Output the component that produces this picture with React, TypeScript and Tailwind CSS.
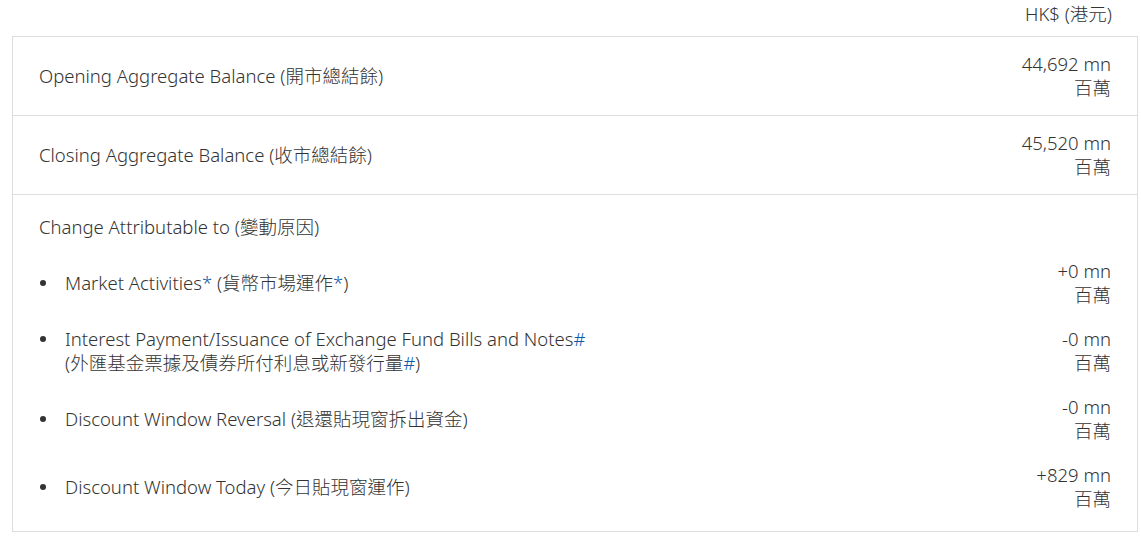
import React from "react";

interface Item {
  label: React.ReactNode;
  value: string;
}

const Mark = ({ children }: { children: React.ReactNode }) => (
  <span className="text-[#0f5aa8]">{children}</span>
);

const items: Item[] = [
  {
    label: (
      <>
        Market Activities<Mark>*</Mark> (貨幣市場運作<Mark>*</Mark>)
      </>
    ),
    value: "+0 mn",
  },
  {
    label: (
      <>
        Interest Payment/Issuance of Exchange Fund Bills and Notes<Mark>#</Mark>
        <br />
        (外匯基金票據及債券所付利息或新發行量<Mark>#</Mark>)
      </>
    ),
    value: "-0 mn",
  },
  { label: "Discount Window Reversal (退還貼現窗拆出資金)", value: "-0 mn" },
  { label: "Discount Window Today (今日貼現窗運作)", value: "+829 mn" },
];

function Amount({ value }: { value: string }) {
  return (
    <div className="text-right shrink-0">
      <div>{value}</div>
      <div>百萬</div>
    </div>
  );
}

export default function App() {
  return (
    <div
      className="w-full bg-white text-[#333] text-[18.5px] font-light leading-6"
      style={{ fontFamily: '"Noto Sans", "Noto Sans CJK TC", sans-serif' }}
    >
      {/* currency heading */}
      <div className="pt-[2px] pb-[10px] pr-[29px] text-right">HK$ (港元)</div>

      <div className="ml-3 mr-[3px] border border-[#dddddd]">
        {/* opening / closing */}
        <div className="flex items-center justify-between px-[26px] py-[15px] border-b border-[#dddddd]">
          <div>Opening Aggregate Balance (開市總結餘)</div>
          <Amount value="44,692 mn" />
        </div>
        <div className="flex items-center justify-between px-[26px] py-[15px] border-b border-[#dddddd]">
          <div>Closing Aggregate Balance (收市總結餘)</div>
          <Amount value="45,520 mn" />
        </div>

        {/* change breakdown */}
        <div className="flex flex-col gap-5 px-[26px] pt-5 pb-5">
          <div>Change Attributable to (變動原因)</div>
          {items.map((item, i) => (
            <div key={i} className="flex items-center justify-between">
              <div className="flex items-start">
                <span className="w-[26px] h-6 shrink-0 flex items-center">
                  <span className="ml-[1px] w-[6px] h-[6px] rounded-full bg-[#333]" />
                </span>
                <div>{item.label}</div>
              </div>
              <Amount value={item.value} />
            </div>
          ))}
        </div>
      </div>
    </div>
  );
}
